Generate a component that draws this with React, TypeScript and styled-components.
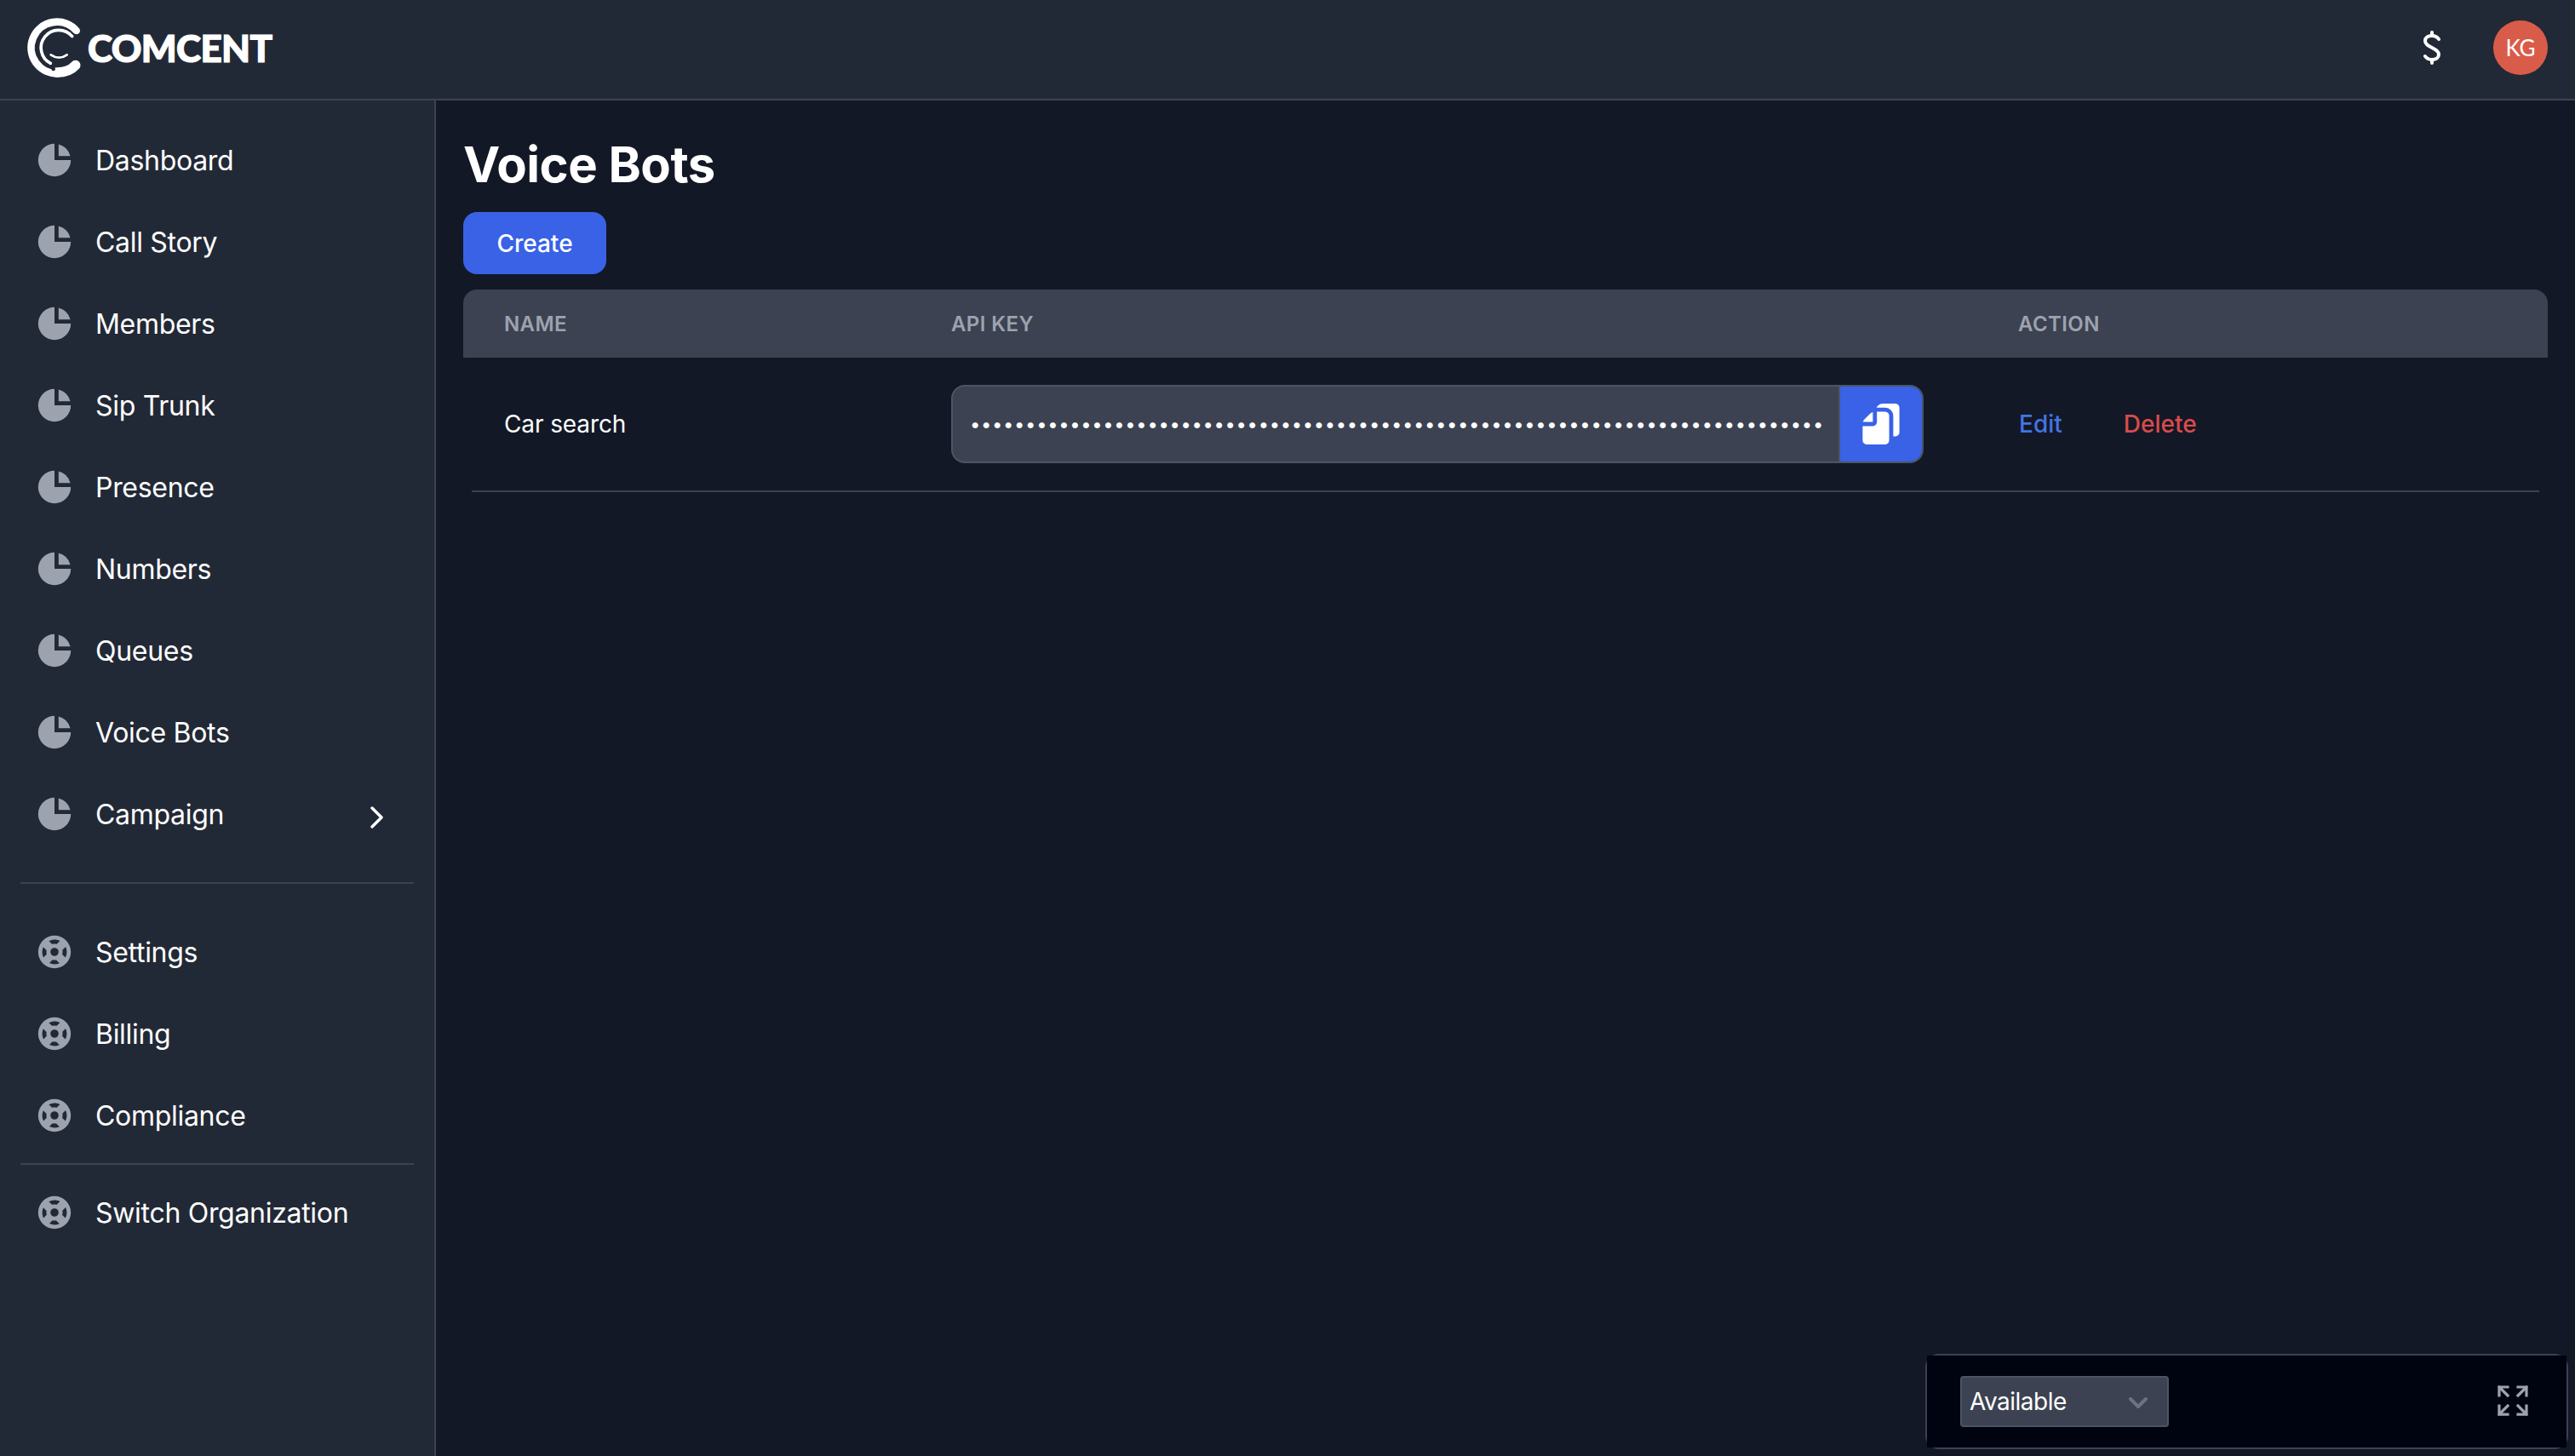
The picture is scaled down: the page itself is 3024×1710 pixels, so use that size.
import React from 'react';
import styled, {createGlobalStyle} from 'styled-components';
import {HiChartPie, HiSupport} from 'react-icons/hi';

const PRIMARY_ITEMS = [
  'Dashboard',
  'Call Story',
  'Members',
  'Sip Trunk',
  'Presence',
  'Numbers',
  'Queues',
  'Voice Bots',
];
const SECONDARY_ITEMS = ['Settings', 'Billing', 'Compliance'];
const API_KEY = 'x'.repeat(77);

export default function App(): JSX.Element {
  return (
    <Page>
      <GlobalStyle />
      <Header>
        <Brand>
          <LogoMark />
          <BrandName>COMCENT</BrandName>
        </Brand>
        <HeaderActions>
          <DollarIcon />
          <Avatar>KG</Avatar>
        </HeaderActions>
      </Header>
      <Body>
        <Sidebar>
          {PRIMARY_ITEMS.map(label => (
            <NavItem key={label}>
              <HiChartPie />
              <NavLabel>{label}</NavLabel>
            </NavItem>
          ))}
          <NavItem>
            <HiChartPie />
            <NavLabel>Campaign</NavLabel>
            <CaretIcon />
          </NavItem>
          <Divider />
          {SECONDARY_ITEMS.map(label => (
            <NavItem key={label}>
              <HiSupport />
              <NavLabel>{label}</NavLabel>
            </NavItem>
          ))}
          <Divider $tight />
          <NavItem>
            <HiSupport />
            <NavLabel>Switch Organization</NavLabel>
          </NavItem>
        </Sidebar>
        <Main>
          <Title>Voice Bots</Title>
          <CreateButton>Create</CreateButton>
          <TableHead>
            <HeadCell>Name</HeadCell>
            <HeadCell>API Key</HeadCell>
            <HeadCell>Action</HeadCell>
          </TableHead>
          <TableRow>
            <Cell>Car search</Cell>
            <KeyField>
              <KeyInput type="password" value={API_KEY} readOnly />
              <CopyButton>
                <CopyIcon />
              </CopyButton>
            </KeyField>
            <Actions>
              <ActionLink $color="#4474e4">Edit</ActionLink>
              <ActionLink $color="#d94b4b">Delete</ActionLink>
            </Actions>
          </TableRow>
        </Main>
      </Body>
      <StatusPanel>
        <StatusInner>
          <SelectWrap>
            <StatusSelect defaultValue="Available">
              <option>Available</option>
              <option>Busy</option>
            </StatusSelect>
            <SelectCaret />
          </SelectWrap>
          <ExpandIcon />
        </StatusInner>
      </StatusPanel>
    </Page>
  );
}

// svg pieces
const LogoMark = () => (
  <LogoSvg viewBox="0 0 222 252" fill="none" stroke="#fff" strokeLinecap="round">
    <path d="M191 66A91 91 0 1 0 128 217" strokeWidth="26" />
    <path d="M120 213Q165 214 188 188" strokeWidth="35" />
    <path d="M176 86A62 62 0 1 0 100 181" strokeWidth="11" />
    <path d="M101 151Q130 171 158 151" strokeWidth="8" />
    <circle cx="110" cy="201" r="7" fill="#222936" stroke="none" />
  </LogoSvg>
);

const DollarIcon = () => (
  <DollarSvg viewBox="0 0 20 40" fill="none" stroke="#fff" strokeWidth="4" strokeLinecap="round">
    <path d="M10 2v4M10 34v4" />
    <path d="M18 10C16 7 13 6 10 6 5 6 2 8.500 2 12c0 4 4 6 8 8s8 4 8 8c0 3.500-3 6-8 6-3 0-6-1-8-4" />
  </DollarSvg>
);

const CaretIcon = () => (
  <CaretSvg viewBox="0 0 15 26" fill="none" stroke="#fff" strokeWidth="3.400" strokeLinecap="round" strokeLinejoin="round">
    <path d="M2 2l11 11L2 24" />
  </CaretSvg>
);

const CopyIcon = () => (
  <CopySvg viewBox="0 0 18 20" fill="#fff">
    <path d="M5 9V4.130a2.960 2.960 0 0 0-1.293.749L.879 7.707A2.960 2.960 0 0 0 .13 9H5Zm11.066-9H9.829a2.980 2.980 0 0 0-2.122.879L7 1.584A.987.987 0 0 0 6.766 2h4.300A3.972 3.972 0 0 1 15 6v10h1.066A1.970 1.970 0 0 0 18 14V2a1.970 1.970 0 0 0-1.934-2Z" />
    <path d="M11.066 4H7v5a2 2 0 0 1-2 2H0v7a1.969 1.969 0 0 0 1.933 2h9.133A1.970 1.970 0 0 0 13 18V6a1.970 1.970 0 0 0-1.934-2Z" />
  </CopySvg>
);

const SelectCaret = () => (
  <SelectCaretSvg viewBox="0 0 22 13" fill="none" stroke="#6b7280" strokeWidth="4" strokeLinecap="round" strokeLinejoin="round">
    <path d="M2 2l9 9 9-9" />
  </SelectCaretSvg>
);

const ExpandIcon = () => (
  <ExpandSvg viewBox="0 0 19 19" fill="none" stroke="#9ca3af" strokeWidth="1.600" strokeLinecap="square" strokeLinejoin="miter">
    <path d="M13 1h5m0 0v5m0-5-5 5M1.979 6V1H7m0 16.042H1.979V12M18 12v5.042h-5M13 12l5 5M2 1l5 5m0 6-5 5" />
  </ExpandSvg>
);

const GlobalStyle = createGlobalStyle`
  html, body, #root {
    margin: 0;
    height: 100%;
  }
  body {
    background: #121826;
    color: #fff;
    font-family: Inter, "Noto Sans", sans-serif;
    overflow: hidden;
  }
  * {
    box-sizing: border-box;
  }
`;

const Page = styled.div`
  position: relative;
  display: flex;
  flex-direction: column;
  height: 100%;
`;

const Header = styled.header`
  display: flex;
  justify-content: space-between;
  align-items: center;
  height: 118px;
  padding: 0 32px 4px 26px;
  background: #222936;
  border-bottom: 2px solid #3c4251;
`;

const Brand = styled.div`
  display: flex;
  align-items: center;
  gap: 3px;
`;

const LogoSvg = styled.svg`
  width: 74px;
  height: 84px;
`;

const BrandName = styled.span`
  font-family: Lato, sans-serif;
  font-size: 44px;
  font-weight: 900;
  line-height: 84px;
  letter-spacing: -0.6px;
  -webkit-text-stroke: 1.200px #fff;
`;

const HeaderActions = styled.div`
  display: flex;
  align-items: center;
  gap: 62px;
`;

const DollarSvg = styled.svg`
  width: 20px;
  height: 40px;
`;

const Avatar = styled.div`
  display: flex;
  align-items: center;
  justify-content: center;
  width: 64px;
  height: 64px;
  border-radius: 50%;
  background: #d95c4a;
  font-family: Lato, sans-serif;
  font-size: 26px;
`;

const Body = styled.div`
  display: flex;
  flex: 1;
  min-height: 0;
`;

const Sidebar = styled.nav`
  width: 512px;
  padding: 22px 24px 0 0;
  background: #222936;
  border-right: 2px solid #3c4251;
`;

const NavItem = styled.div`
  display: flex;
  align-items: center;
  height: 96px;
  padding-left: 40px;
  font-size: 32px;
  letter-spacing: -0.3px;

  > svg:first-child {
    flex: none;
    width: 48px;
    height: 48px;
    color: #9ca3af;
  }
`;

const NavLabel = styled.span`
  flex: 1;
  margin-left: 24px;
`;

const CaretSvg = styled.svg`
  width: 15px;
  height: 26px;
  margin: 8px 36px 0 0;
`;

const Divider = styled.hr<{$tight?: boolean}>`
  height: 2px;
  margin: ${p => (p.$tight ? '8px 0 8px 24px' : '32px 0 32px 24px')};
  border: 0;
  background: #3c4251;
`;

const Main = styled.main`
  flex: 1;
  min-width: 0;
  padding: 39px 32px 0;
`;

const Title = styled.h1`
  margin: 0 0 20px;
  font-size: 58px;
  font-weight: 700;
  line-height: 72px;
  letter-spacing: -0.5px;
`;

const CreateButton = styled.button`
  display: block;
  width: 168px;
  height: 73px;
  margin-bottom: 18px;
  border: 0;
  border-radius: 16px;
  background: #3962e6;
  color: #fff;
  font-family: inherit;
  font-size: 28px;
  font-weight: 500;
`;

const TableHead = styled.div`
  display: grid;
  grid-template-columns: 525px 1253px 1fr;
  align-items: center;
  height: 80px;
  padding-left: 48px;
  border-radius: 16px 16px 0 0;
  background: #3c4251;
`;

const HeadCell = styled.div`
  color: #9ca3af;
  font-size: 24px;
  font-weight: 600;
  letter-spacing: 0.4px;
  text-transform: uppercase;
`;

const TableRow = styled.div`
  display: grid;
  grid-template-columns: 525px 1254px 1fr;
  align-items: center;
  height: 158px;
  margin: 0 10px;
  padding-left: 38px;
  border-bottom: 2px solid #3c4251;
`;

const Cell = styled.div`
  font-size: 28px;
  letter-spacing: -0.1px;
`;

const KeyField = styled.div`
  display: flex;
  width: 1142px;
  height: 92px;
  border: 2px solid #4b5563;
  border-radius: 16px;
  background: #3c4251;
  overflow: hidden;
`;

const KeyInput = styled.input`
  flex: 1;
  min-width: 0;
  padding: 0 0 0 20px;
  border: 0;
  outline: 0;
  background: transparent;
  color: #fff;
  font-family: inherit;
  font-size: 22px;
  letter-spacing: 0.650px;
`;

const CopyButton = styled.button`
  display: flex;
  align-items: center;
  justify-content: center;
  flex: none;
  width: 98px;
  border: 0;
  border-left: 2px solid #4b5563;
  background: #3962e6;
`;

const CopySvg = styled.svg`
  width: 44px;
  height: 48px;
`;

const Actions = styled.div`
  display: flex;
  gap: 72px;
`;

const ActionLink = styled.a<{$color: string}>`
  color: ${p => p.$color};
  font-size: 28px;
  font-weight: 500;
`;

const StatusPanel = styled.div`
  position: absolute;
  right: 8px;
  bottom: 8px;
  width: 755px;
  height: 112px;
  border: 2px solid #3c4251;
  border-radius: 16px;
`;

const StatusInner = styled.div`
  display: flex;
  justify-content: space-between;
  align-items: center;
  height: 100%;
  padding: 0 45px 0 39px;
  background: #000310;
`;

const SelectWrap = styled.div`
  position: relative;
  width: 245px;
  height: 60px;
`;

const StatusSelect = styled.select`
  width: 100%;
  height: 100%;
  padding: 0 0 0 9px;
  border: 2px solid #4b5563;
  border-radius: 4px;
  outline: 0;
  background: #3c4251;
  color: #fff;
  font-family: inherit;
  font-size: 28px;
  letter-spacing: -0.5px;
  appearance: none;
`;

const SelectCaretSvg = styled.svg`
  position: absolute;
  top: 25px;
  right: 25px;
  width: 22px;
  height: 13px;
`;

const ExpandSvg = styled.svg`
  width: 38px;
  height: 38px;
`;
